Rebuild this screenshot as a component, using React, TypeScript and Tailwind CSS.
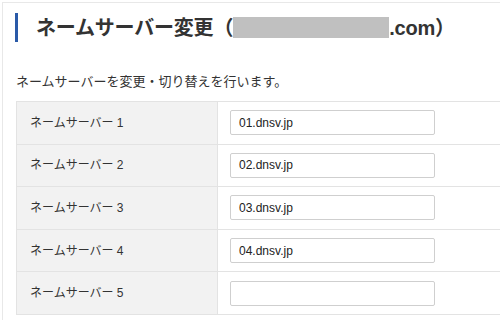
import React from 'react';

const servers = ['01.dnsv.jp', '02.dnsv.jp', '03.dnsv.jp', '04.dnsv.jp', ''];

export default function App() {
  return (
    <div
      className="w-[500px] h-[320px] overflow-hidden bg-white text-[#333]"
      style={{ fontFamily: '"Liberation Sans", "Noto Sans CJK JP", sans-serif' }}
    >
      <div className="ml-[2px] mt-[2px] h-[318px] border-l border-t border-[#e8e8e8] bg-white">
        {/* Title */}
        <div className="flex items-center pl-[12px] pt-[8px] h-[41px]">
          <div className="w-[3px] h-[29px] bg-[#2a5aa8]" />
          <h1 className="ml-[18px] flex items-center text-[20px] font-bold leading-none text-[#333] tracking-[-0.2px]">
            ネームサーバー変更（
            <span className="inline-block w-[156px] h-[21px] bg-[#c0c0c0]" />
            .com）
          </h1>
        </div>

        <p className="mt-[31px] ml-[13px] text-[13px] leading-none">
          ネームサーバーを変更・切り替えを行います。
        </p>

        {/* Table */}
        <div className="mt-[13px] ml-[13px] border-t border-l border-[#e3e3e3]">
          {servers.map((value, i) => (
            <div key={i} className="flex h-[42.6px] border-b border-[#e3e3e3]">
              <div className="w-[201px] shrink-0 bg-[#f2f2f2] border-r border-[#e3e3e3] flex items-center pl-[13px] text-[12px]">
                ネームサーバー {i + 1}
              </div>
              <div className="flex-1 flex items-center pl-[12px]">
                <div className="w-[205px] h-[25px] border border-[#cfcfcf] rounded-[2px] bg-white flex items-center pl-[8px] text-[12px] text-[#222]">
                  {value}
                </div>
              </div>
            </div>
          ))}
        </div>
      </div>
    </div>
  );
}
